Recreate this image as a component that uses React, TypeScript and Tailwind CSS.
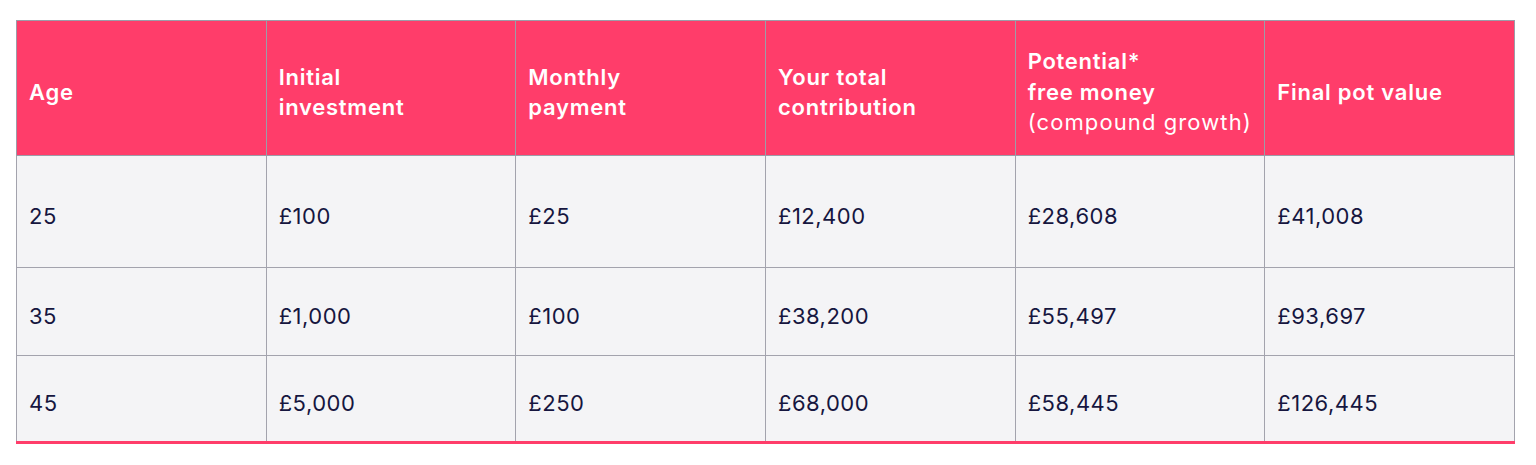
import React from "react";

const rows = [
  { h: "h-[112px]", cells: ["25", "£100", "£25", "£12,400", "£28,608", "£41,008"] },
  { h: "h-[88px]", cells: ["35", "£1,000", "£100", "£38,200", "£55,497", "£93,697"] },
  { h: "h-[87px]", cells: ["45", "£5,000", "£250", "£68,000", "£58,445", "£126,445"] },
];

export default function App() {
  return (
    <div className="bg-white w-[1536px] h-[465px] pt-[20px] pl-[16px]" style={{ fontFamily: "Inter, 'Noto Sans', sans-serif" }}>
      <table className="border-collapse w-[1499px] table-fixed">
        <thead>
          <tr className="h-[135px] bg-[#ff3d6a] text-white">
            {[
              <>Age</>,
              <>Initial<br />investment</>,
              <>Monthly<br />payment</>,
              <>Your total<br />contribution</>,
              <>Potential*<br />free money<br /><span className="font-normal tracking-[1.1px]">(compound growth)</span></>,
              <>Final pot value</>,
            ].map((c, i) => (
              <th
                key={i}
                className="border border-[#9c9ca8] text-left align-middle px-[12px] pt-[8px] text-[22px] leading-[30.5px] font-semibold tracking-[0.75px]"
              >
                {c}
              </th>
            ))}
          </tr>
        </thead>
        <tbody>
          {rows.map((r, ri) => (
            <tr key={ri} className={`${r.h} bg-[#f4f4f6] text-[#16163f] ${ri === rows.length - 1 ? "border-b-[3px] border-b-[#ff3d6a]" : ""}`}>
              {r.cells.map((c, ci) => (
                <td
                  key={ci}
                  className={`border border-[#a3a3ad] px-[12px] pt-[8px] text-[22px] leading-[30px] tracking-[0.5px] align-middle ${ri === rows.length - 1 ? "border-b-[3px] border-b-[#ff3d6a]" : ""}`}
                >
                  {c}
                </td>
              ))}
            </tr>
          ))}
        </tbody>
      </table>
    </div>
  );
}
